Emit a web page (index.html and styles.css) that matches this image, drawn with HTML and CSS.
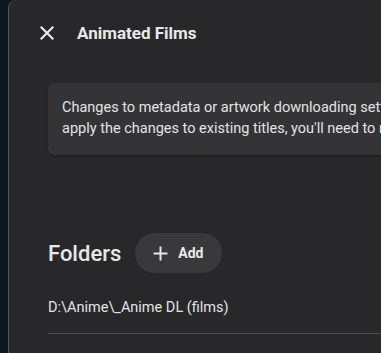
FILE: index.html
```html
<!DOCTYPE html>
<html lang="en">
  <head>
    <meta charset="UTF-8">
    <meta name="viewport" content="width=device-width, initial-scale=1.0">
    <title>Animated Films</title>
    <link rel="stylesheet" href="styles.css">
  </head>
  <body>
    <div class="panel">
      <header class="panel-header">
        <button class="close-button" aria-label="Close">
          <svg width="14" height="14" viewBox="0 0 14 14">
            <path d="M1.5 1.5 L12.5 12.5 M12.5 1.5 L1.5 12.5" stroke="#e8e8e8" stroke-width="2.2" stroke-linecap="square" fill="none"/>
          </svg>
        </button>
        <h1 class="panel-title">Animated Films</h1>
      </header>

      <div class="panel-body">
        <div class="notice">
          <p class="notice-line">Changes to metadata or artwork downloading settings will only affect new titles. To</p>
          <p class="notice-line">apply the changes to existing titles, you'll need to refresh their metadata.</p>
        </div>

        <div class="section-head">
          <h2>Folders</h2>
          <button class="add-button">
            <svg width="15" height="15" viewBox="0 0 15 15">
              <path d="M7.5 0.5 V14.5 M0.5 7.5 H14.5" stroke="#e8e8e8" stroke-width="2" fill="none"/>
            </svg>
            <span>Add</span>
          </button>
        </div>

        <div class="folder-row">D:\Anime\_Anime DL (films)</div>
      </div>
    </div>
  </body>
</html>
```

FILE: styles.css
```css
html,
body {
  height: 100%;
}

body {
  margin: 0;
  font-family: Roboto, "Noto Sans", sans-serif;
  background-color: #0c1822;
  color: #e5e5e5;
  overflow: hidden;
}

.panel {
  margin-left: 8px;
  height: 100%;
  background-color: #28282a;
  border-left: 1px solid #56565a;
  border-top-left-radius: 8px;
  overflow: hidden;
}

.panel-header {
  display: flex;
  align-items: center;
  height: 40px;
  padding: 13px 0 0 31px;
}

.close-button {
  display: flex;
  padding: 0;
  border: none;
  background: none;
  cursor: pointer;
}

.panel-title {
  margin: 0 0 0 23px;
  font-size: 17px;
  font-weight: 700;
  color: #e8e8e8;
}

.panel-body {
  padding: 0 0 0 39px;
}

.notice {
  width: 640px;
  margin-top: 30px;
  padding: 14px 14px 16px;
  background-color: #343437;
  border-radius: 6px;
  font-size: 14.5px;
  line-height: 21px;
  color: #e3e3e3;
  white-space: nowrap;
  box-shadow: 0 1px 2px rgba(0, 0, 0, 0.3);
}

.notice-line {
  margin: 0;
}

.section-head {
  display: flex;
  align-items: center;
  gap: 14px;
  margin-top: 78px;
}

.section-head h2 {
  margin: 0;
  font-size: 22px;
  font-weight: 500;
  color: #e8e8e8;
}

.add-button {
  display: flex;
  align-items: center;
  gap: 10px;
  height: 40px;
  padding: 0 19px 0 18px;
  border: none;
  border-radius: 20px;
  background-color: #39393c;
  color: #e8e8e8;
  font-family: inherit;
  font-size: 14px;
  font-weight: 700;
  cursor: pointer;
}

.folder-row {
  padding: 25px 0 15px;
  font-size: 14.5px;
  line-height: 20px;
  color: #e3e3e3;
  border-bottom: 1px solid #4c4c4f;
}
```
